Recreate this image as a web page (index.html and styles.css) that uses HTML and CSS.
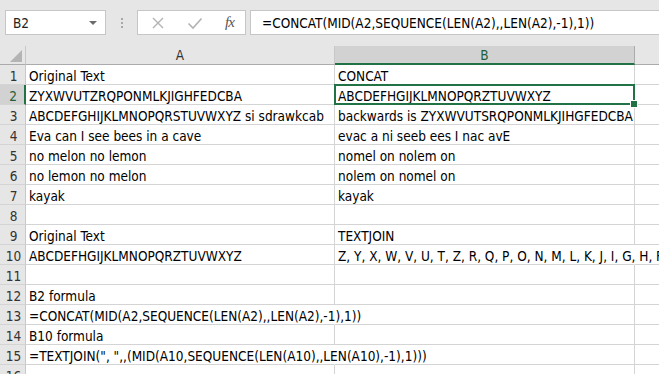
FILE: index.html
```html
<!DOCTYPE html>
<html>
<head>
<meta charset="utf-8">
<link rel="stylesheet" href="styles.css">
</head>
<body>
<div class="app">
  <div class="toolbar">
    <div class="namebox">
      <span class="name">B2</span>
      <svg class="caret" width="8" height="4" viewBox="0 0 8 4"><path d="M0 0H8L4 4Z" fill="#6b6b6b"/></svg>
    </div>
    <div class="grip"><span></span><span></span><span></span></div>
    <div class="fxbtns">
      <svg class="ico" width="14" height="14" viewBox="0 0 14 14"><path d="M2 2L12 12M12 2L2 12" stroke="#b3b3b3" stroke-width="1.4" fill="none"/></svg>
      <svg class="ico" width="16" height="14" viewBox="0 0 16 14"><path d="M1.5 7.5L6 12L14.5 2.5" stroke="#b3b3b3" stroke-width="1.6" fill="none"/></svg>
      <span class="fx">fx</span>
    </div>
    <div class="formula">=CONCAT(MID(A2,SEQUENCE(LEN(A2),,LEN(A2),-1),1))</div>
  </div>
  <div class="sheet">
    <div class="corner"><svg width="12" height="12" viewBox="0 0 12 12"><path d="M12 0V12H0Z" fill="#b4b4b4"/></svg></div>
    <div class="colhead">A</div>
    <div class="colhead sel">B</div>
    <div class="colhead last"></div>

    <div class="rowhead">1</div><div class="cell">Original Text</div><div class="cell">CONCAT</div><div class="cell last"></div>
    <div class="rowhead sel">2</div><div class="cell">ZYXWVUTZRQPONMLKJIGHFEDCBA</div><div class="cell">ABCDEFHGIJKLMNOPQRZTUVWXYZ</div><div class="cell last"></div>
    <div class="rowhead">3</div><div class="cell">ABCDEFGHIJKLMNOPQRSTUVWXYZ si sdrawkcab</div><div class="cell">backwards is ZYXWVUTSRQPONMLKJIHGFEDCBA</div><div class="cell last"></div>
    <div class="rowhead">4</div><div class="cell">Eva can I see bees in a cave</div><div class="cell">evac a ni seeb ees I nac avE</div><div class="cell last"></div>
    <div class="rowhead">5</div><div class="cell">no melon no lemon</div><div class="cell">nomel on nolem on</div><div class="cell last"></div>
    <div class="rowhead">6</div><div class="cell">no lemon no melon</div><div class="cell">nolem on nomel on</div><div class="cell last"></div>
    <div class="rowhead">7</div><div class="cell">kayak</div><div class="cell">kayak</div><div class="cell last"></div>
    <div class="rowhead">8</div><div class="cell"></div><div class="cell"></div><div class="cell last"></div>
    <div class="rowhead">9</div><div class="cell">Original Text</div><div class="cell">TEXTJOIN</div><div class="cell last"></div>
    <div class="rowhead">10</div><div class="cell">ABCDEFHGIJKLMNOPQRZTUVWXYZ</div><div class="cell over">Z, Y, X, W, V, U, T, Z, R, Q, P, O, N, M, L, K, J, I, G, H, F, E, D, C, B, A</div><div class="cell last"></div>
    <div class="rowhead">11</div><div class="cell"></div><div class="cell"></div><div class="cell last"></div>
    <div class="rowhead">12</div><div class="cell">B2 formula</div><div class="cell"></div><div class="cell last"></div>
    <div class="rowhead">13</div><div class="cell over">=CONCAT(MID(A2,SEQUENCE(LEN(A2),,LEN(A2),-1),1))</div><div class="cell"></div><div class="cell last"></div>
    <div class="rowhead">14</div><div class="cell">B10 formula</div><div class="cell"></div><div class="cell last"></div>
    <div class="rowhead">15</div><div class="cell over">=TEXTJOIN(", ",,(MID(A10,SEQUENCE(LEN(A10),,LEN(A10),-1),1)))</div><div class="cell"></div><div class="cell last"></div>
    <div class="rowhead">16</div><div class="cell"></div><div class="cell"></div><div class="cell last"></div>

    <div class="selection"><span class="handle"></span></div>
  </div>
</div>
</body>
</html>
```

FILE: styles.css
```css
html, body {
  margin: 0;
  padding: 0;
  background: #ffffff;
  overflow: hidden;
}
.app {
  width: 659px;
  height: 374px;
  overflow: hidden;
  font-family: "DejaVu Sans Condensed", "DejaVu Sans", sans-serif;
  font-size: 13.5px;
  color: #000;
}
.toolbar {
  height: 46px;
  background: #e6e6e6;
  box-sizing: border-box;
  padding: 10px 0 11px 5px;
  display: flex;
  align-items: stretch;
}
.namebox {
  width: 101px;
  box-sizing: border-box;
  background: #fff;
  border: 1px solid #c6c6c6;
  display: flex;
  align-items: center;
  justify-content: space-between;
  padding: 0 8px 0 7px;
}
.name {
  color: #222;
}
.grip {
  width: 31px;
  display: flex;
  flex-direction: column;
  align-items: center;
  justify-content: center;
  gap: 2px;
}
.grip span {
  width: 2px;
  height: 2px;
  background: #a8a8a8;
}
.fxbtns {
  width: 109px;
  box-sizing: border-box;
  background: #fff;
  border: 1px solid #c6c6c6;
  display: flex;
  align-items: center;
  padding: 0 0 0 13px;
  gap: 22px;
}
.fx {
  font-family: "Liberation Serif", serif;
  font-style: italic;
  font-size: 15px;
  color: #555;
  letter-spacing: -1px;
}
.formula {
  flex: 1;
  margin-left: 4px;
  box-sizing: border-box;
  background: #fff;
  border: 1px solid #c6c6c6;
  border-right: none;
  padding: 0 0 0 11px;
  display: flex;
  align-items: center;
  white-space: nowrap;
}
.sheet {
  position: relative;
  display: grid;
  grid-template-columns: 26px 309px 300px 24px;
  grid-template-rows: 19px;
  grid-auto-rows: 20px;
}
.corner {
  background: #e6e6e6;
  border-right: 1px solid #c8c8c8;
  border-bottom: 1px solid #ababab;
  box-sizing: border-box;
  display: flex;
  align-items: flex-end;
  justify-content: flex-end;
  padding: 0 3px 2px 0;
}
.colhead {
  background: #e6e6e6;
  border-right: 1px solid #c8c8c8;
  border-bottom: 1px solid #ababab;
  box-sizing: border-box;
  text-align: center;
  line-height: 18px;
  color: #333;
}
.colhead.sel {
  background: #d2d2d2;
  border-bottom: 2px solid #217346;
  border-right-color: #ababab;
  color: #1e5f3b;
}
.colhead.last {
  border-right: none;
}
.rowhead {
  background: #e6e6e6;
  border-right: 1px solid #c8c8c8;
  border-bottom: 1px solid #d4d4d4;
  box-sizing: border-box;
  text-align: center;
  line-height: 22px;
  color: #333;
  padding-left: 2px;
}
.rowhead.sel {
  background: #d2d2d2;
  border-right: 2px solid #217346;
  color: #1e5f3b;
}
.cell {
  border-right: 1px solid #d4d4d4;
  border-bottom: 1px solid #d4d4d4;
  box-sizing: border-box;
  white-space: nowrap;
  line-height: 22px;
  padding-left: 3px;
  overflow: visible;
}
.cell.over {
  border-right-color: #fff;
}
.cell.last {
  border-right: none;
}
.selection {
  position: absolute;
  left: 334px;
  top: 38px;
  width: 301px;
  height: 21px;
  box-sizing: border-box;
  border: 2px solid #217346;
  pointer-events: none;
}
.handle {
  position: absolute;
  right: -5px;
  bottom: -5px;
  width: 6px;
  height: 6px;
  background: #217346;
  border: 1px solid #fff;
}
```
